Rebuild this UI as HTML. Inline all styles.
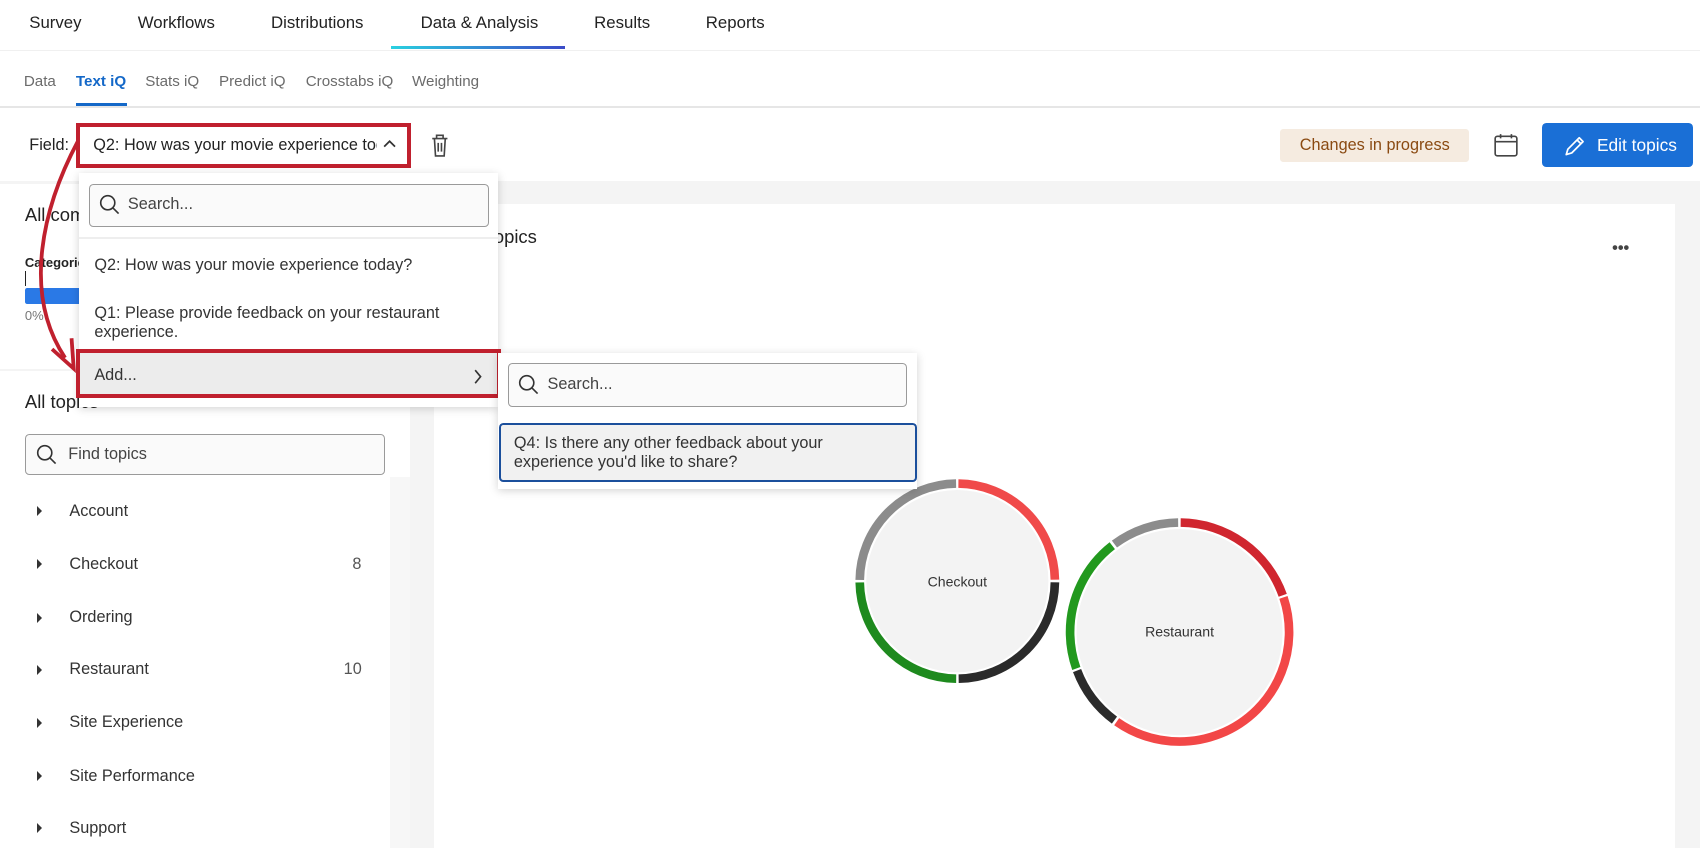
<!DOCTYPE html>
<html><head><meta charset="utf-8"><style>
html,body{margin:0;padding:0;width:1700px;height:848px;overflow:hidden;background:#fff}
#w{position:relative;width:1568px;height:782px;zoom:1.08418;font-family:"Liberation Sans",sans-serif;color:#222;overflow:hidden}
.a{position:absolute;white-space:nowrap}
.nav{font-size:15.5px;top:12px;color:#222}
.sub{font-size:14px;top:67px;color:#6b6b6b}
.inp{position:absolute;border:1px solid #9a9a9a;border-radius:4px;background:#fafafa;box-sizing:border-box}
.t{font-size:15px;color:#333}
.tri{position:absolute;width:0;height:0;border-top:5px solid transparent;border-bottom:5px solid transparent;border-left:5px solid #333}
</style></head><body><div id="w">
<div class="a nav" style="left:27px">Survey</div>
<div class="a nav" style="left:127px">Workflows</div>
<div class="a nav" style="left:250px">Distributions</div>
<div class="a nav" style="left:388px">Data &amp; Analysis</div>
<div class="a nav" style="left:548px">Results</div>
<div class="a nav" style="left:651px">Reports</div>
<div class="a" style="left:361px;top:42px;width:160px;height:3px;background:linear-gradient(90deg,#2ad0e0,#3b4bc8)"></div>
<div class="a" style="left:0;top:46px;width:1568px;height:1px;background:#f0f0f0"></div>
<div class="a sub" style="left:22px">Data</div>
<div class="a sub" style="left:70px;color:#1468c8;font-weight:bold">Text iQ</div>
<div class="a" style="left:70px;top:95px;width:47px;height:3px;background:#1468c8"></div>
<div class="a sub" style="left:134px">Stats iQ</div>
<div class="a sub" style="left:202px">Predict iQ</div>
<div class="a sub" style="left:282px">Crosstabs iQ</div>
<div class="a sub" style="left:380px">Weighting</div>
<div class="a" style="left:0;top:98px;width:1568px;height:2px;background:#e6e6e6"></div>
<div class="a" style="left:27px;top:125px;font-size:15px">Field:</div>
<div class="a" style="left:70px;top:113px;width:302px;height:35px;border:4px solid #c0202e;background:#fff"></div>
<div class="a" style="left:86px;top:125px;font-size:15px;width:262px;overflow:hidden">Q2: How was your movie experience today?</div>
<svg class="a" style="left:352px;top:127px" width="14" height="10"><path d="M2 8 L7 3 L12 8" fill="none" stroke="#333" stroke-width="1.6"/></svg>
<svg class="a" style="left:396px;top:121px" width="20" height="26"><path d="M3 7h14M7 7V4h6v3M5 7l1 16h8l1-16M8.5 11v8M11.5 11v8" fill="none" stroke="#444" stroke-width="1.5"/></svg>
<div class="a" style="left:1181px;top:119px;width:174px;height:30px;background:#f5ebe0;border-radius:3px;color:#8a4a12;font-size:15px;line-height:30px;text-align:center">Changes in progress</div>
<svg class="a" style="left:1377px;top:123px" width="24" height="22"><rect x="2" y="3" width="20" height="18" rx="2" fill="none" stroke="#444" stroke-width="1.5"/><path d="M2 8h20M7 1v4M17 1v4" stroke="#444" stroke-width="1.5"/></svg>
<div class="a" style="left:1422px;top:113px;width:140px;height:41px;background:#1a6fd6;border-radius:4px;color:#fff;font-size:16px;line-height:41px"><span style="position:absolute;left:51px">Edit topics</span>
<svg style="position:absolute;left:20px;top:11px" width="22" height="22"><path d="M3 19l1.5-5L15 3.5l3.5 3.5L8 17.5z M13 5.5l3.5 3.5" fill="none" stroke="#fff" stroke-width="1.6" stroke-linejoin="round"/></svg></div>
<div class="a" style="left:0;top:167px;width:1568px;height:615px;background:#f4f4f4"></div>
<div class="a" style="left:0;top:170px;width:378px;height:170px;background:#fff"></div>
<div class="a" style="left:23px;top:188px;font-size:17px">All comments</div>
<div class="a" style="left:23px;top:235px;font-size:12px;font-weight:bold">Categories</div>
<div class="a" style="left:23px;top:250px;width:1px;height:14px;background:#222"></div>
<div class="a" style="left:23px;top:266px;width:60px;height:14px;background:#2a79e6;border-radius:2px"></div>
<div class="a" style="left:23px;top:284px;font-size:12px;color:#777">0%</div>
<div class="a" style="left:0;top:342px;width:378px;height:440px;background:#fff"></div>
<div class="a" style="left:360px;top:440px;width:18px;height:342px;background:#f7f7f7"></div>
<div class="a" style="left:23px;top:361px;font-size:17px">All topics</div>
<div class="inp" style="left:23px;top:400px;width:332px;height:38px"></div>
<svg class="a" style="left:32px;top:409px" width="22" height="22"><circle cx="9" cy="9" r="6.5" fill="none" stroke="#333" stroke-width="1.5"/><path d="M14 14l5 5" stroke="#333" stroke-width="1.5"/></svg>
<div class="a" style="left:63px;top:410px;font-size:15px;color:#444">Find topics</div>
<div class="tri" style="left:34px;top:467px"></div><div class="a t" style="left:64px;top:463px">Account</div>
<div class="tri" style="left:34px;top:516px"></div><div class="a t" style="left:64px;top:512px">Checkout</div><div class="a t" style="left:325px;top:512px;color:#555">8</div>
<div class="tri" style="left:34px;top:565px"></div><div class="a t" style="left:64px;top:561px">Ordering</div>
<div class="tri" style="left:34px;top:613px"></div><div class="a t" style="left:64px;top:609px">Restaurant</div><div class="a t" style="left:317px;top:609px;color:#555">10</div>
<div class="tri" style="left:34px;top:662px"></div><div class="a t" style="left:64px;top:658px">Site Experience</div>
<div class="tri" style="left:34px;top:711px"></div><div class="a t" style="left:64px;top:707px">Site Performance</div>
<div class="tri" style="left:34px;top:759px"></div><div class="a t" style="left:64px;top:755px">Support</div>
<div class="a" style="left:400px;top:188px;width:1145px;height:594px;background:#fff"></div>
<div class="a" style="left:447px;top:208px;font-size:17px">Topics</div>
<div class="a" style="left:1487px;top:220px;font-size:15px;font-weight:bold;color:#444;letter-spacing:0px">•••</div>
<svg class="a" style="left:0;top:0" width="1568" height="782">
<g transform="translate(883 536) rotate(-90)" fill="none" stroke-width="8">
<circle r="84" fill="#f3f3f3" stroke="none"/>
<circle r="90" stroke="#f04a4a" stroke-dasharray="139 1000" stroke-dashoffset="-1"/>
<circle r="90" stroke="#2b2b2b" stroke-dasharray="139 1000" stroke-dashoffset="-142.4"/>
<circle r="90" stroke="#1e8a1e" stroke-dasharray="139 1000" stroke-dashoffset="-283.7"/>
<circle r="90" stroke="#8c8c8c" stroke-dasharray="139 1000" stroke-dashoffset="-425.1"/>
</g>
<g transform="translate(1088 583) rotate(-90)" fill="none" stroke-width="8">
<circle r="95" fill="#f3f3f3" stroke="none"/>
<circle r="101" stroke="#d0262f" stroke-dasharray="123 1000" stroke-dashoffset="-1"/>
<circle r="101" stroke="#f24747" stroke-dasharray="253 1000" stroke-dashoffset="-126"/>
<circle r="101" stroke="#2b2b2b" stroke-dasharray="58 1000" stroke-dashoffset="-381.5"/>
<circle r="101" stroke="#22991e" stroke-dasharray="126 1000" stroke-dashoffset="-441.5"/>
<circle r="101" stroke="#8c8c8c" stroke-dasharray="63 1000" stroke-dashoffset="-570"/>
</g>
<text x="883" y="541" font-size="13" text-anchor="middle" font-family="Liberation Sans" fill="#333">Checkout</text>
<text x="1088" y="587" font-size="13" text-anchor="middle" font-family="Liberation Sans" fill="#333">Restaurant</text>
</svg>
<div class="a" style="left:73px;top:160px;width:386px;height:215px;background:#fff;box-shadow:0 2px 8px rgba(0,0,0,.18)"></div>
<div class="inp" style="left:82px;top:170px;width:369px;height:39px"></div>
<svg class="a" style="left:90px;top:178px" width="22" height="22"><circle cx="9" cy="9" r="6.5" fill="none" stroke="#333" stroke-width="1.5"/><path d="M14 14l5 5" stroke="#333" stroke-width="1.5"/></svg>
<div class="a" style="left:118px;top:180px;font-size:15px;color:#444">Search...</div>
<div class="a" style="left:73px;top:219px;width:386px;height:1px;background:#eee"></div>
<div class="a t" style="left:87px;top:236px">Q2: How was your movie experience today?</div>
<div class="a t" style="left:87px;top:280px;line-height:18px">Q1: Please provide feedback on your restaurant<br>experience.</div>
<div class="a" style="left:70px;top:322px;width:385px;height:38px;border:4px solid #c0202e;background:#ececec"></div>
<div class="a t" style="left:87px;top:338px">Add...</div>
<svg class="a" style="left:436px;top:339px" width="10" height="16"><path d="M2 2l5 6-5 6" fill="none" stroke="#333" stroke-width="1.5"/></svg>
<div class="a" style="left:459px;top:326px;width:387px;height:125px;background:#fff;box-shadow:0 2px 8px rgba(0,0,0,.18)"></div>
<div class="inp" style="left:469px;top:335px;width:368px;height:40px"></div>
<svg class="a" style="left:477px;top:344px" width="22" height="22"><circle cx="9" cy="9" r="6.5" fill="none" stroke="#333" stroke-width="1.5"/><path d="M14 14l5 5" stroke="#333" stroke-width="1.5"/></svg>
<div class="a" style="left:505px;top:346px;font-size:15px;color:#444">Search...</div>
<div class="a" style="left:460px;top:390px;width:386px;height:55px;box-sizing:border-box;border:2px solid #1b4f9c;border-radius:4px;background:#f1f1f1"></div>
<div class="a t" style="left:474px;top:400px;line-height:18px">Q4: Is there any other feedback about your<br>experience you'd like to share?</div>
<svg class="a" style="left:0;top:0" width="200" height="400"><path d="M72 130 C40 190,20 270,60 330" fill="none" stroke="#c0202e" stroke-width="3.5"/><path d="M48 322 L68 340 L66 312" fill="none" stroke="#c0202e" stroke-width="3.5"/></svg>
</div></body></html>
